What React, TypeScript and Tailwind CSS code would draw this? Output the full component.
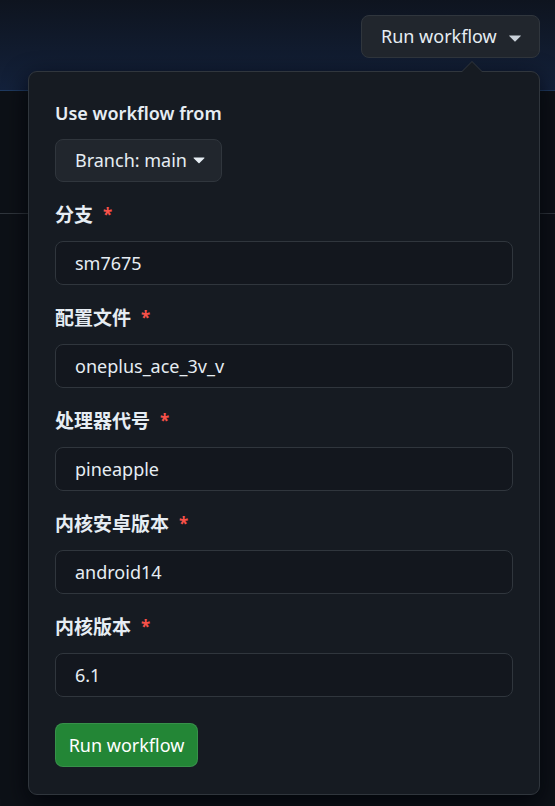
import React from 'react'

type Field = {
  label: string
  value: string
}

const fields: Field[] = [
  { label: '分支', value: 'sm7675' },
  { label: '配置文件', value: 'oneplus_ace_3v_v' },
  { label: '处理器代号', value: 'pineapple' },
  { label: '内核安卓版本', value: 'android14' },
  { label: '内核版本', value: '6.1' },
]

function Caret({ className }: { className?: string }) {
  return (
    <svg viewBox="0 0 16 16" className={className} fill="currentColor">
      <path d="m4.427 7.427 3.396 3.396a.25.25 0 0 0 .354 0l3.396-3.396A.25.25 0 0 0 11.396 7H4.604a.25.25 0 0 0-.177.427Z" />
    </svg>
  )
}

function FieldRow({ field }: { field: Field }) {
  return (
    <div className="mt-[20px]">
      <div className="flex items-center h-[26px] font-bold text-[19px] text-[#e6edf3]">
        <span>{field.label}</span>
        <span className="ml-[10px] text-[#f85149] text-[17px]">*</span>
      </div>
      <div className="mt-[13px] h-[44px] rounded-[8px] border border-[#30363d] bg-[#0d1117]/30 flex items-center px-[19px] text-[#e6edf3]">
        {field.value}
      </div>
    </div>
  )
}

export default function App() {
  return (
    <div className="relative w-[555px] h-[806px] overflow-hidden bg-[#0d1117] text-[18px] font-['Noto_Sans','Noto_Sans_CJK_SC',sans-serif]">
      <div className="h-[91px] bg-gradient-to-b from-[#0e141f] to-[#13213b] border-b border-[#1f3a60] flex justify-end items-start pt-[15px] pr-[15px]">
        <button className="h-[43px] w-[179px] rounded-[8px] border border-[#30363d] bg-[#21262d] text-[#e6edf3] flex items-center pl-[19px] gap-[5px]">
          <span>Run workflow</span>
          <Caret className="text-[#c9d1d9] w-[26px] h-[26px]" />
        </button>
      </div>
      <div className="h-[123px] border-b border-[#30363d]" />

      <div className="absolute left-[28px] top-[71px] w-[512px] h-[724px] rounded-[9px] border border-[#30363d] bg-[#161b22] shadow-[0_8px_24px_rgba(1,4,9,0.85)] px-[26px] pt-[28px]">
        <div className="absolute -top-[11px] left-[432px] w-0 h-0 border-x-[11px] border-x-transparent border-b-[11px] border-b-[#30363d]" />
        <div className="absolute -top-[10px] left-[433px] w-0 h-0 border-x-[10px] border-x-transparent border-b-[10px] border-b-[#161b22]" />

        <div className="h-[26px] flex items-center font-semibold text-[#e6edf3]">Use workflow from</div>
        <button className="mt-[13px] h-[43px] w-[167px] rounded-[8px] border border-[#30363d] bg-[#21262d] text-[#e6edf3] flex items-center pl-[19px] gap-0">
          <span>Branch: main</span>
          <Caret className="text-[#e6edf3] w-[24px] h-[24px] -mt-[3px]" />
        </button>

        {fields.map((f) => (
          <FieldRow key={f.label} field={f} />
        ))}

        <button className="mt-[26px] h-[44px] w-[143px] rounded-[8px] border border-[#f0f6fc]/10 bg-[#238636] text-white flex items-center justify-center">
          Run workflow
        </button>
      </div>
    </div>
  )
}
